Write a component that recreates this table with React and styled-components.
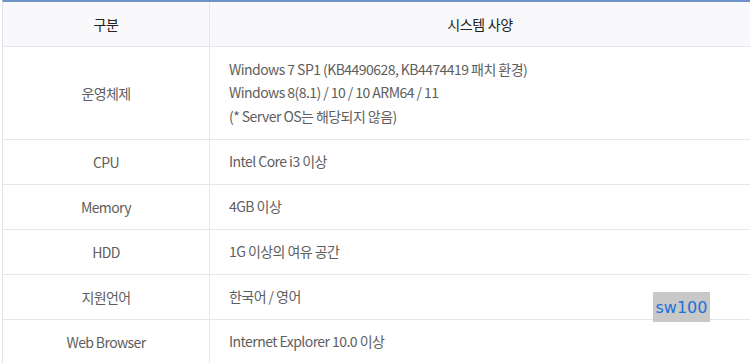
import React from 'react'
import styled, { createGlobalStyle } from 'styled-components'

const GlobalStyle = createGlobalStyle`
    html, body {
        margin: 0;
        padding: 0;
        background: #ffffff;
    }
    body {
        font-family: "Noto Sans CJK KR", "Noto Sans", sans-serif;
    }
`;

const Wrap = styled.div`
    position: relative;
    width: 750px;
    height: 363px;
    overflow: hidden;
    background: #fff;
`;

const Table = styled.div`
    display: grid;
    grid-template-columns: 206px 1fr;
    margin-left: 2px;
    border-top: 2px solid #6d93c9;
    border-left: 1px solid #e4e4e8;
`;

const HeadCell = styled.div`
    height: 44px;
    display: flex;
    align-items: center;
    justify-content: center;
    background: #f9f9fc;
    border-bottom: 1px solid #e6e6ea;
    border-left: ${p => (p.first ? 'none' : '1px solid #e6e6ea')};
    color: #222;
    font-size: 14px;
    letter-spacing: -0.3px;
`;

const Label = styled.div`
    height: ${p => p.h || 44}px;
    display: flex;
    align-items: center;
    justify-content: center;
    border-bottom: 1px solid #e6e6ea;
    color: #5e5e5e;
    font-size: 14px;
    letter-spacing: -0.6px;
`;

const Value = styled.div`
    height: ${p => p.h || 44}px;
    display: flex;
    flex-direction: column;
    justify-content: center;
    padding-left: 19px;
    border-bottom: 1px solid #e6e6ea;
    border-left: 1px solid #e6e6ea;
    color: #5e5e5e;
    font-size: 14px;
    letter-spacing: -0.55px;
    line-height: 23.5px;
`;

const Badge = styled.span`
    position: absolute;
    left: 653px;
    top: 292px;
    width: 57px;
    height: 30px;
    display: flex;
    align-items: center;
    justify-content: center;
    background: #c8c8c8;
    color: #1a73d9;
    font-family: "DejaVu Sans", Verdana, sans-serif;
    font-size: 16px;
`;

const rows = [
    { label: '운영체제', h: 92, lines: [
        'Windows 7 SP1 (KB4490628, KB4474419 패치 환경)',
        'Windows 8(8.1) / 10 / 10 ARM64 / 11',
        '(* Server OS는 해당되지 않음)',
    ] },
    { label: 'CPU', lines: ['Intel Core i3 이상'] },
    { label: 'Memory', lines: ['4GB 이상'] },
    { label: 'HDD', lines: ['1G 이상의 여유 공간'] },
    { label: '지원언어', lines: ['한국어 / 영어'] },
    { label: 'Web Browser', lines: ['Internet Explorer 10.0 이상'] },
];

export default function App() {
    return (
        <Wrap>
            <GlobalStyle />
            <Table>
                <HeadCell first>구분</HeadCell>
                <HeadCell>시스템 사양</HeadCell>
                {rows.map(r => (
                    <React.Fragment key={r.label}>
                        <Label h={r.h}>{r.label}</Label>
                        <Value h={r.h}>
                            {r.lines.map(l => <div key={l}>{l}</div>)}
                        </Value>
                    </React.Fragment>
                ))}
            </Table>
            <Badge>sw100</Badge>
        </Wrap>
    )
}
